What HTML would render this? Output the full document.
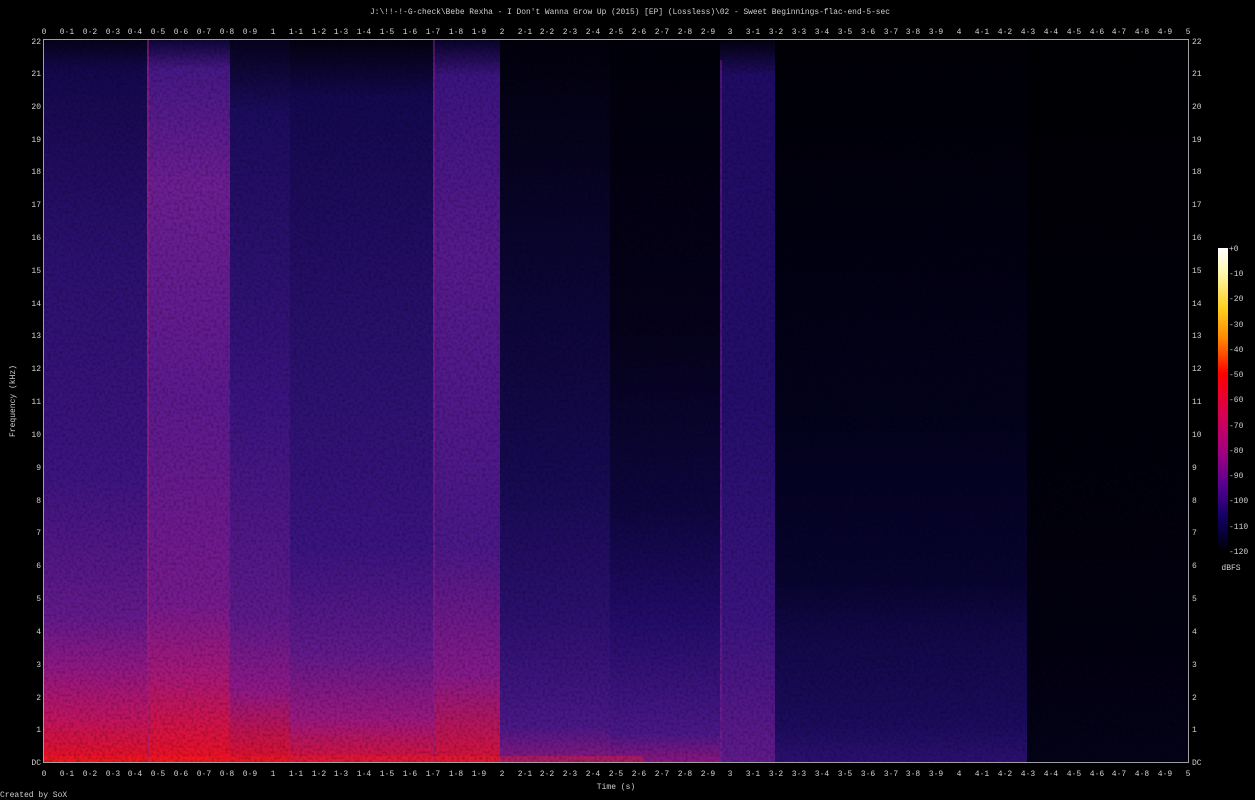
<!DOCTYPE html>
<html><head><meta charset="utf-8"><style>
html,body{margin:0;padding:0;background:#000;}
svg{display:block}
text{font-family:"Liberation Mono","DejaVu Sans Mono",monospace;font-size:8px;fill:#d0d0d0}
</style></head><body>
<svg width="1255" height="800" viewBox="0 0 1255 800" xmlns="http://www.w3.org/2000/svg">
<defs>
<linearGradient id="gA" x1="0" y1="40" x2="0" y2="762" gradientUnits="userSpaceOnUse">
<stop offset="0" stop-color="#06031a"/><stop offset="0.04" stop-color="#14084c"/><stop offset="0.3" stop-color="#2c1070"/><stop offset="0.6" stop-color="#3c1480"/><stop offset="0.8" stop-color="#641a8c"/><stop offset="0.87" stop-color="#901884"/><stop offset="0.94" stop-color="#c01460"/><stop offset="1" stop-color="#e81020"/></linearGradient>
<linearGradient id="gB" x1="0" y1="40" x2="0" y2="762" gradientUnits="userSpaceOnUse">
<stop offset="0" stop-color="#0e0638"/><stop offset="0.04" stop-color="#461886"/><stop offset="0.2" stop-color="#6c1e92"/><stop offset="0.5" stop-color="#5c1a8e"/><stop offset="0.78" stop-color="#761a8e"/><stop offset="0.88" stop-color="#a81878"/><stop offset="0.96" stop-color="#d81240"/><stop offset="1" stop-color="#ee1020"/></linearGradient>
<linearGradient id="gB2" x1="0" y1="40" x2="0" y2="762" gradientUnits="userSpaceOnUse">
<stop offset="0" stop-color="#06031e"/><stop offset="0.1" stop-color="#1c0c5e"/><stop offset="0.5" stop-color="#3a1480"/><stop offset="0.8" stop-color="#5e1a8c"/><stop offset="0.9" stop-color="#901888"/><stop offset="1" stop-color="#e01028"/></linearGradient>
<linearGradient id="gC" x1="0" y1="40" x2="0" y2="762" gradientUnits="userSpaceOnUse">
<stop offset="0" stop-color="#03020f"/><stop offset="0.08" stop-color="#140850"/><stop offset="0.4" stop-color="#28106c"/><stop offset="0.7" stop-color="#3a1480"/><stop offset="0.85" stop-color="#621a8c"/><stop offset="0.94" stop-color="#9a1880"/><stop offset="1" stop-color="#d81238"/></linearGradient>
<linearGradient id="gD" x1="0" y1="40" x2="0" y2="762" gradientUnits="userSpaceOnUse">
<stop offset="0" stop-color="#08042a"/><stop offset="0.05" stop-color="#3c1480"/><stop offset="0.3" stop-color="#561a8c"/><stop offset="0.7" stop-color="#4a1888"/><stop offset="0.88" stop-color="#861a8a"/><stop offset="1" stop-color="#d81238"/></linearGradient>
<linearGradient id="gE" x1="0" y1="40" x2="0" y2="762" gradientUnits="userSpaceOnUse">
<stop offset="0" stop-color="#02010c"/><stop offset="0.3" stop-color="#0a0530"/><stop offset="0.6" stop-color="#160a52"/><stop offset="0.8" stop-color="#2c1070"/><stop offset="0.95" stop-color="#4a1888"/><stop offset="1" stop-color="#8a1880"/></linearGradient>
<linearGradient id="gE2" x1="0" y1="40" x2="0" y2="762" gradientUnits="userSpaceOnUse">
<stop offset="0" stop-color="#01000a"/><stop offset="0.4" stop-color="#05021a"/><stop offset="0.65" stop-color="#0e0640"/><stop offset="0.8" stop-color="#220c6a"/><stop offset="0.96" stop-color="#4a1888"/><stop offset="1" stop-color="#8a1680"/></linearGradient>
<linearGradient id="gF" x1="0" y1="40" x2="0" y2="762" gradientUnits="userSpaceOnUse">
<stop offset="0" stop-color="#03020f"/><stop offset="0.05" stop-color="#200c66"/><stop offset="0.5" stop-color="#240e6c"/><stop offset="0.8" stop-color="#3a1480"/><stop offset="1" stop-color="#601a8c"/></linearGradient>
<linearGradient id="gG" x1="0" y1="40" x2="0" y2="762" gradientUnits="userSpaceOnUse">
<stop offset="0" stop-color="#010006"/><stop offset="0.5" stop-color="#03021a"/><stop offset="0.75" stop-color="#080430"/><stop offset="0.82" stop-color="#120848"/><stop offset="0.95" stop-color="#1c0c5e"/><stop offset="1" stop-color="#2c1070"/></linearGradient>
<linearGradient id="gH" x1="0" y1="40" x2="0" y2="762" gradientUnits="userSpaceOnUse">
<stop offset="0" stop-color="#000004"/><stop offset="0.8" stop-color="#02010e"/><stop offset="1" stop-color="#040218"/></linearGradient>
<linearGradient id="cbar" x1="0" y1="0" x2="0" y2="1">
<stop offset="0" stop-color="#ffffff"/><stop offset="0.08" stop-color="#fff8b0"/><stop offset="0.2" stop-color="#ffd020"/><stop offset="0.3" stop-color="#ff8a00"/><stop offset="0.42" stop-color="#ff0000"/><stop offset="0.55" stop-color="#d80050"/><stop offset="0.68" stop-color="#a00080"/><stop offset="0.8" stop-color="#500090"/><stop offset="0.9" stop-color="#100060"/><stop offset="1" stop-color="#000010"/></linearGradient>
<filter id="nz" x="0" y="0" width="100%" height="100%"><feTurbulence type="fractalNoise" baseFrequency="0.35" numOctaves="1" seed="3"/><feColorMatrix type="matrix" values="0 0 0 0 0  0 0 0 0 0  0 0 0 0 0  0 0 0 1.2 -0.5"/></filter>
</defs>
<rect x="0" y="0" width="1255" height="800" fill="#000"/>
<g>
<rect x="44" y="40" width="104" height="722" fill="url(#gA)"/>
<rect x="147" y="40" width="84" height="722" fill="url(#gB)"/>
<rect x="230" y="40" width="61" height="722" fill="url(#gB2)"/>
<rect x="290" y="40" width="144" height="722" fill="url(#gC)"/>
<rect x="433" y="40" width="68" height="722" fill="url(#gD)"/>
<rect x="500" y="40" width="110" height="722" fill="url(#gE)"/>
<rect x="610" y="40" width="111" height="722" fill="url(#gE2)"/>
<rect x="720" y="40" width="56" height="722" fill="url(#gF)"/>
<rect x="775" y="40" width="253" height="722" fill="url(#gG)"/>
<rect x="1027" y="40" width="161" height="722" fill="url(#gH)"/>
<rect x="147" y="40" width="2" height="722" fill="#a01e80" opacity="0.6"/>
<rect x="433" y="40" width="2" height="722" fill="#8a1e90" opacity="0.5"/>
<rect x="720" y="60" width="2" height="702" fill="#7a1e90" opacity="0.5"/>
<rect x="44" y="756" width="600" height="6" fill="#ff2020" opacity="0.3"/>
<rect x="44" y="40" width="1144" height="722" filter="url(#nz)" opacity="0.5"/>
</g>
<rect x="43.5" y="39.5" width="1145" height="723" fill="none" stroke="#a0a0a0" stroke-width="1"/>
<text x="370" y="14" textLength="520" lengthAdjust="spacingAndGlyphs">J:\!!-!-G-check\Bebe Rexha - I Don't Wanna Grow Up (2015) [EP] (Lossless)\02 - Sweet Beginnings-flac-end-5-sec</text>
<g text-anchor="middle">
<text x="44" y="34">0</text><text x="67" y="34">0·1</text><text x="90" y="34">0·2</text><text x="113" y="34">0·3</text><text x="135" y="34">0·4</text><text x="158" y="34">0·5</text><text x="181" y="34">0·6</text><text x="204" y="34">0·7</text><text x="227" y="34">0·8</text><text x="250" y="34">0·9</text><text x="273" y="34">1</text><text x="296" y="34">1·1</text><text x="319" y="34">1·2</text><text x="341" y="34">1·3</text><text x="364" y="34">1·4</text><text x="387" y="34">1·5</text><text x="410" y="34">1·6</text><text x="433" y="34">1·7</text><text x="456" y="34">1·8</text><text x="479" y="34">1·9</text><text x="502" y="34">2</text><text x="525" y="34">2·1</text><text x="547" y="34">2·2</text><text x="570" y="34">2·3</text><text x="593" y="34">2·4</text><text x="616" y="34">2·5</text><text x="639" y="34">2·6</text><text x="662" y="34">2·7</text><text x="685" y="34">2·8</text><text x="708" y="34">2·9</text><text x="730" y="34">3</text><text x="753" y="34">3·1</text><text x="776" y="34">3·2</text><text x="799" y="34">3·3</text><text x="822" y="34">3·4</text><text x="845" y="34">3·5</text><text x="868" y="34">3·6</text><text x="891" y="34">3·7</text><text x="913" y="34">3·8</text><text x="936" y="34">3·9</text><text x="959" y="34">4</text><text x="982" y="34">4·1</text><text x="1005" y="34">4·2</text><text x="1028" y="34">4·3</text><text x="1051" y="34">4·4</text><text x="1074" y="34">4·5</text><text x="1097" y="34">4·6</text><text x="1119" y="34">4·7</text><text x="1142" y="34">4·8</text><text x="1165" y="34">4·9</text><text x="1188" y="34">5</text>
</g>
<g text-anchor="middle">
<text x="44" y="776">0</text><text x="67" y="776">0·1</text><text x="90" y="776">0·2</text><text x="113" y="776">0·3</text><text x="135" y="776">0·4</text><text x="158" y="776">0·5</text><text x="181" y="776">0·6</text><text x="204" y="776">0·7</text><text x="227" y="776">0·8</text><text x="250" y="776">0·9</text><text x="273" y="776">1</text><text x="296" y="776">1·1</text><text x="319" y="776">1·2</text><text x="341" y="776">1·3</text><text x="364" y="776">1·4</text><text x="387" y="776">1·5</text><text x="410" y="776">1·6</text><text x="433" y="776">1·7</text><text x="456" y="776">1·8</text><text x="479" y="776">1·9</text><text x="502" y="776">2</text><text x="525" y="776">2·1</text><text x="547" y="776">2·2</text><text x="570" y="776">2·3</text><text x="593" y="776">2·4</text><text x="616" y="776">2·5</text><text x="639" y="776">2·6</text><text x="662" y="776">2·7</text><text x="685" y="776">2·8</text><text x="708" y="776">2·9</text><text x="730" y="776">3</text><text x="753" y="776">3·1</text><text x="776" y="776">3·2</text><text x="799" y="776">3·3</text><text x="822" y="776">3·4</text><text x="845" y="776">3·5</text><text x="868" y="776">3·6</text><text x="891" y="776">3·7</text><text x="913" y="776">3·8</text><text x="936" y="776">3·9</text><text x="959" y="776">4</text><text x="982" y="776">4·1</text><text x="1005" y="776">4·2</text><text x="1028" y="776">4·3</text><text x="1051" y="776">4·4</text><text x="1074" y="776">4·5</text><text x="1097" y="776">4·6</text><text x="1119" y="776">4·7</text><text x="1142" y="776">4·8</text><text x="1165" y="776">4·9</text><text x="1188" y="776">5</text>
</g>
<g text-anchor="end">
<text x="41" y="765">DC</text><text x="41" y="732">1</text><text x="41" y="700">2</text><text x="41" y="667">3</text><text x="41" y="634">4</text><text x="41" y="601">5</text><text x="41" y="568">6</text><text x="41" y="535">7</text><text x="41" y="503">8</text><text x="41" y="470">9</text><text x="41" y="437">10</text><text x="41" y="404">11</text><text x="41" y="371">12</text><text x="41" y="338">13</text><text x="41" y="306">14</text><text x="41" y="273">15</text><text x="41" y="240">16</text><text x="41" y="207">17</text><text x="41" y="174">18</text><text x="41" y="142">19</text><text x="41" y="109">20</text><text x="41" y="76">21</text><text x="41" y="44">22</text>
</g>
<g text-anchor="start">
<text x="1192" y="765">DC</text><text x="1192" y="732">1</text><text x="1192" y="700">2</text><text x="1192" y="667">3</text><text x="1192" y="634">4</text><text x="1192" y="601">5</text><text x="1192" y="568">6</text><text x="1192" y="535">7</text><text x="1192" y="503">8</text><text x="1192" y="470">9</text><text x="1192" y="437">10</text><text x="1192" y="404">11</text><text x="1192" y="371">12</text><text x="1192" y="338">13</text><text x="1192" y="306">14</text><text x="1192" y="273">15</text><text x="1192" y="240">16</text><text x="1192" y="207">17</text><text x="1192" y="174">18</text><text x="1192" y="142">19</text><text x="1192" y="109">20</text><text x="1192" y="76">21</text><text x="1192" y="44">22</text>
</g>
<text x="15" y="401" text-anchor="middle" transform="rotate(-90 15 401)">Frequency (kHz)</text>
<text x="616" y="789" text-anchor="middle">Time (s)</text>
<text x="0" y="797">Created by SoX</text>
<rect x="1218" y="248" width="10" height="300" fill="url(#cbar)"/>
<g text-anchor="start">
<text x="1229" y="251">+0</text><text x="1229" y="276">-10</text><text x="1229" y="301">-20</text><text x="1229" y="327">-30</text><text x="1229" y="352">-40</text><text x="1229" y="377">-50</text><text x="1229" y="402">-60</text><text x="1229" y="428">-70</text><text x="1229" y="453">-80</text><text x="1229" y="478">-90</text><text x="1229" y="503">-100</text><text x="1229" y="529">-110</text><text x="1229" y="554">-120</text>
</g>
<text x="1231" y="570" text-anchor="middle">dBFS</text>
</svg>
</body></html>
